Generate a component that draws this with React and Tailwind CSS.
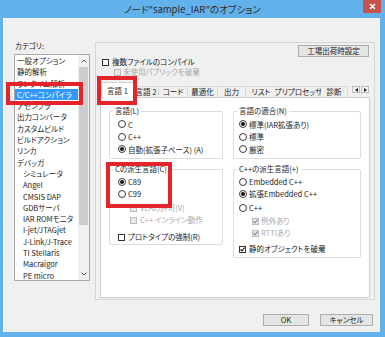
import React from "react";

function Check({ checked = false, disabled = false }) {
  return (
    <span
      className={
        disabled
          ? "w-[7px] h-[7px] border border-[#bcbcbc] bg-[#e8e8e8] flex items-center justify-center shrink-0"
          : "w-[7px] h-[7px] border border-[#333333] bg-white flex items-center justify-center shrink-0"
      }
    >
      {checked && (
        <svg width="5" height="5" viewBox="0 0 5 5">
          <path
            d="M0.4 2.4 L1.9 3.9 L4.6 0.6"
            fill="none"
            stroke={disabled ? "#8c8c8c" : "#1a1a1a"}
            strokeWidth="1.2"
          />
        </svg>
      )}
    </span>
  );
}

function Radio({ on = false }) {
  return (
    <span className="w-[8px] h-[8px] rounded-full border border-[#3a3a3a] bg-white flex items-center justify-center shrink-0">
      {on && <span className="w-[4px] h-[4px] rounded-full bg-[#111111]" />}
    </span>
  );
}

function Group({ label, className, children }) {
  return (
    <div className={"border border-[#dcdcdc] rounded-[2px] flex flex-col " + className}>
      <div className="h-[10px] -mt-[6px] leading-[10px] ml-[3px] px-[2px] bg-white self-start">
        {label}
      </div>
      {children}
    </div>
  );
}

const listItems = [
  ["一般オプション", 0],
  ["静的解析", 0],
  ["ランタイム解析", 0],
  ["C/C++コンパイラ", 0],
  ["アセンブラ", 0],
  ["出力コンバータ", 0],
  ["カスタムビルド", 0],
  ["ビルドアクション", 0],
  ["リンカ", 0],
  ["デバッガ", 0],
  ["シミュレータ", 1],
  ["Angel", 1],
  ["CMSIS DAP", 1],
  ["GDBサーバ", 1],
  ["IAR ROMモニタ", 1],
  ["I-jet/JTAGjet", 1],
  ["J-Link/J-Trace", 1],
  ["TI Stellaris", 1],
  ["Macraigor", 1],
  ["PE micro", 1],
];

const tabs = [
  ["言語 2", "w-[25px]"],
  ["コード", "w-[29px]"],
  ["最適化", "w-[30px]"],
  ["出力", "w-[28px]"],
  ["リスト", "w-[31px]"],
  ["プリプロセッサ", "w-[44px]"],
  ["診断", "w-[27px]"],
];

export default function App() {
  return (
    <div className="w-[385px] h-[337px] bg-[#62b1eb] flex flex-col font-['Noto_Sans_CJK_JP',sans-serif] [font-feature-settings:'palt'] text-[7.5px] text-[#1a1a1a] overflow-hidden">
      {/* title bar */}
      <div className="relative h-[18px] flex items-center justify-center text-[9.5px] text-[#2b2b2b]">
        ノード"sample_IAR"のオプション
        <div className="absolute top-0 right-[4px] w-[18px] h-[13px] bg-[#c9514d] flex items-center justify-center">
          <svg width="7" height="7" viewBox="0 0 7 7">
            <path d="M1 1L6 6M6 1L1 6" stroke="white" strokeWidth="1.6" />
          </svg>
        </div>
      </div>

      {/* client */}
      <div className="relative ml-[3px] w-[377px] h-[314px] bg-[#f0f0f0] border-l border-white flex flex-col">
        <div className="flex mt-[22px]">
          {/* left: category */}
          <div className="flex flex-col ml-[10px]">
            <div className="h-[14px] leading-[12px] pl-[1px]">カテゴリ:</div>
            <div className="w-[76px] h-[227px] border border-[#a9a9a9] bg-white flex">
              <div className="flex-1 flex flex-col">
                {listItems.map(([t, ind], i) => (
                  <div
                    key={t}
                    className={
                      i === 3
                        ? "h-[11.3px] leading-[11.3px] bg-[#3399ff] text-white pl-[2px] whitespace-nowrap"
                        : ind
                        ? "h-[11.3px] leading-[11.3px] pl-[8px] whitespace-nowrap"
                        : "h-[11.3px] leading-[11.3px] pl-[2px] whitespace-nowrap"
                    }
                  >
                    {t}
                  </div>
                ))}
              </div>
              <div className="w-[11px] bg-[#f0f0f0] flex flex-col">
                <div className="h-[12px] flex items-center justify-center">
                  <svg width="6" height="4" viewBox="0 0 6 4">
                    <path d="M0.5 3.5 L3 1 L5.5 3.5" fill="none" stroke="#606060" strokeWidth="1" />
                  </svg>
                </div>
                <div className="h-[158px] mx-[1px] bg-[#cdcdcd]" />
                <div className="flex-1" />
                <div className="h-[12px] flex items-center justify-center">
                  <svg width="6" height="4" viewBox="0 0 6 4">
                    <path d="M0.5 0.5 L3 3 L5.5 0.5" fill="none" stroke="#606060" strokeWidth="1" />
                  </svg>
                </div>
              </div>
            </div>
          </div>

          {/* right: panel */}
          <div className="ml-[5px] mt-[2px] w-[280px] h-[258px] border border-[#d6d6d6] flex flex-col">
            <div className="flex justify-end pr-[5px] mt-[2px]">
              <div className="w-[71px] h-[12px] border border-[#adadad] bg-[#e5e5e5] flex items-center justify-center">
                工場出荷時設定
              </div>
            </div>
            <div className="h-[10px] flex items-center gap-[3px] pl-[6px]">
              <Check />
              <span>複数ファイルのコンパイル</span>
            </div>
            <div className="h-[10px] flex items-center gap-[2px] pl-[18px] text-[#a8a8a8]">
              <Check disabled />
              <span>未使用パブリックを破棄</span>
            </div>

            {/* tab control */}
            <div className="ml-[4px] w-[270px] mt-[5px] flex flex-col">
              <div className="flex items-end h-[15px]">
                <div className="relative z-[1] ml-[1px] w-[33px] h-[16px] -mb-[1px] bg-white border border-b-0 border-[#d0d0d0] flex items-center justify-center">
                  言語 1
                </div>
                {tabs.map(([t, w]) => (
                  <div
                    key={t}
                    className={w + " h-[11px] bg-[#f0f0f0] border-t border-r border-[#d9d9d9] flex items-center justify-center whitespace-nowrap"}
                  >
                    {t}
                  </div>
                ))}
                <div className="ml-auto mr-[1px] self-start mt-[4px] flex gap-[1px]">
                  <div className="w-[8px] h-[7px] border border-[#bcbcbc] bg-[#f4f4f4] flex items-center justify-center">
                    <svg width="3" height="4" viewBox="0 0 3 4"><path d="M3 0 L0 2 L3 4Z" fill="#222" /></svg>
                  </div>
                  <div className="w-[8px] h-[7px] border border-[#bcbcbc] bg-[#f4f4f4] flex items-center justify-center">
                    <svg width="3" height="4" viewBox="0 0 3 4"><path d="M0 0 L3 2 L0 4Z" fill="#222" /></svg>
                  </div>
                </div>
              </div>

              {/* page */}
              <div className="h-[201px] bg-white border border-[#d0d0d0] flex pt-[13px] pl-[8px] gap-[10px]">
                {/* left column */}
                <div className="w-[114px] flex flex-col">
                  <Group label="言語(L)" className="h-[48px]">
                    <div className="mt-[2px] pl-[8px] flex flex-col">
                      <div className="h-[12.5px] flex items-center gap-[2px]"><Radio /><span>C</span></div>
                      <div className="h-[12.5px] flex items-center gap-[2px]"><Radio /><span>C++</span></div>
                      <div className="h-[12.5px] flex items-center gap-[2px]"><Radio on /><span>自動(拡張子ベース) (A)</span></div>
                    </div>
                  </Group>
                  <Group label="Cの派生言語(C)" className="h-[76px] mt-[10px]">
                    <div className="mt-[2px] flex flex-col">
                      <div className="h-[12px] pl-[8px] flex items-center gap-[2px]"><Radio on /><span>C89</span></div>
                      <div className="h-[11px] pl-[8px] flex items-center gap-[2px]"><Radio /><span>C99</span></div>
                      <div className="h-[12px] mt-[3px] pl-[20px] flex items-center gap-[3px] text-[#a8a8a8]"><Check disabled /><span>VLAの許可(V)</span></div>
                      <div className="h-[12px] pl-[20px] flex items-center gap-[3px] text-[#a8a8a8]"><Check disabled /><span>C++ インライン動作</span></div>
                      <div className="h-[12px] mt-[5px] pl-[8px] flex items-center gap-[3px]"><Check /><span>プロトタイプの強制(R)</span></div>
                    </div>
                  </Group>
                </div>
                {/* right column */}
                <div className="w-[128px] flex flex-col">
                  <Group label="言語の適合(N)" className="h-[48px]">
                    <div className="mt-[2px] pl-[5px] flex flex-col">
                      <div className="h-[12.5px] flex items-center gap-[2px]"><Radio on /><span>標準(IAR拡張あり)</span></div>
                      <div className="h-[12.5px] flex items-center gap-[2px]"><Radio /><span>標準</span></div>
                      <div className="h-[12.5px] flex items-center gap-[2px]"><Radio /><span>厳密</span></div>
                    </div>
                  </Group>
                  <Group label="C++の派生言語(+)" className="h-[89px] mt-[10px]">
                    <div className="mt-[2px] flex flex-col">
                      <div className="h-[12px] pl-[5px] flex items-center gap-[2px]"><Radio /><span>Embedded C++</span></div>
                      <div className="h-[12px] pl-[5px] flex items-center gap-[2px]"><Radio on /><span>拡張Embedded C++</span></div>
                      <div className="h-[12px] mt-[2px] pl-[5px] flex items-center gap-[2px]"><Radio /><span>C++</span></div>
                      <div className="h-[12px] mt-[1px] pl-[18px] flex items-center gap-[2px] text-[#a8a8a8]"><Check checked disabled /><span>例外あり</span></div>
                      <div className="h-[12px] pl-[18px] flex items-center gap-[2px] text-[#a8a8a8]"><Check checked disabled /><span>RTTIあり</span></div>
                      <div className="h-[12px] mt-[4px] pl-[5px] flex items-center gap-[3px]"><Check checked /><span>静的オブジェクトを破棄</span></div>
                    </div>
                  </Group>
                </div>
              </div>
            </div>
          </div>
        </div>

        {/* bottom buttons */}
        <div className="mt-[14px] flex justify-end pr-[7px] gap-[11px]">
          <div className="w-[46px] h-[12px] border border-[#adadad] bg-[#e5e5e5] flex items-center justify-center">OK</div>
          <div className="w-[53px] h-[12px] border border-[#adadad] bg-[#e5e5e5] flex items-center justify-center">キャンセル</div>
        </div>

        {/* red annotation boxes */}
        <div className="absolute left-[2px] top-[64px] w-[77px] h-[23px] border-[4px] border-[#e5232b] z-10" />
        <div className="absolute left-[93px] top-[58px] w-[40px] h-[29px] border-[4px] border-[#e5232b] z-10" />
        <div className="absolute left-[102px] top-[144px] w-[66px] h-[46px] border-[4px] border-[#e5232b] z-10" />
      </div>
    </div>
  );
}
